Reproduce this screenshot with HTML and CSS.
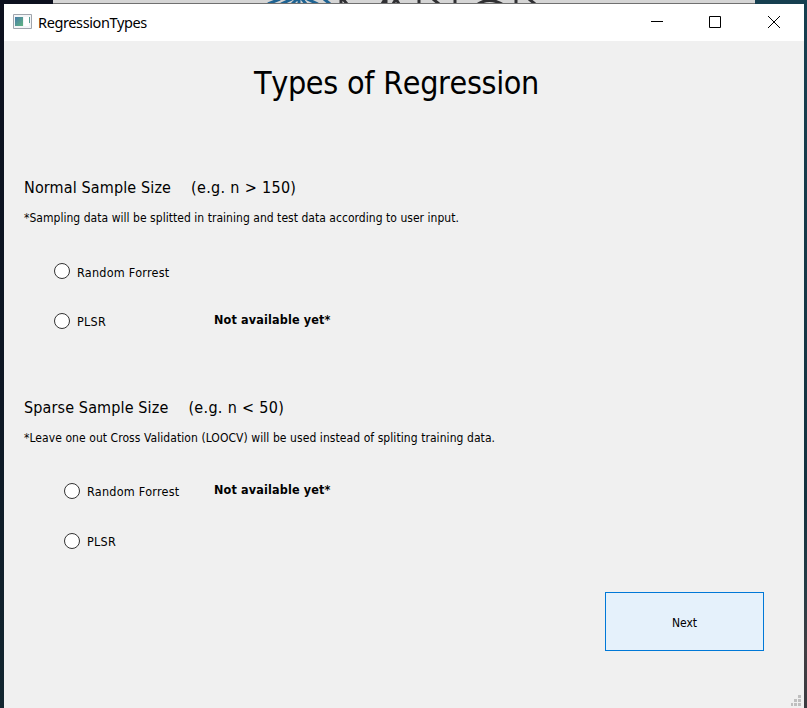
FILE: index.html
```html
<!DOCTYPE html>
<html lang="en">
<head>
<meta charset="utf-8">
<title>RegressionTypes</title>
<link rel="stylesheet" href="styles.css">
</head>
<body>
<div class="backdrop">
  <svg class="emblem" width="64" height="3" viewBox="0 0 64 3" fill="none" stroke="#1f6392" stroke-width="3"><path d="M1 4 13-1M14 4 25-1M25 4 30-1M32-1V4M39 4 35-1M51 4 40-1M63 4 57-1"/></svg>
  <svg class="letters" width="202" height="3" viewBox="0 0 202 3" fill="none" stroke="#303033" stroke-width="3"><path d="M2 0V3M4-1 8 4M43 4 46-1M47 0V3M54 4 57-1 60 4M80 0V3M94-1 100 4M116 0V3M139 4Q150-3 163 4M177 0V3M190-1 196 4"/></svg>
</div>
<main class="window">
  <header class="titlebar">
    <svg class="app-icon" width="19" height="16" viewBox="0 0 19 16"><defs><linearGradient id="screen" x2="1" y2="1"><stop stop-color="#487baa"/><stop offset="1" stop-color="#5fb580"/></linearGradient></defs><path fill="#f3f5f7" stroke="#a0a5ad" d="M.5.5h18v14H.5z"/><path fill="url(#screen)" d="M2 3h8v9H2z"/><path fill="#fff" d="M11 3h5v9h-5z"/><path fill="#5b9d94" d="M16 3h1v6h-1z"/></svg>
    <span class="caption">RegressionTypes</span>
    <svg class="controls" width="130" height="14" viewBox="0 0 130 14" fill="none" stroke="#000"><path d="M0 5.500h12M58.500.5h11v11h-11z"/><path d="m117 0 12 12M129 0 117 12"/></svg>
  </header>
  <h1>Types of Regression</h1>
  <section class="normal">
    <h2><span class="name">Normal Sample Size</span><span class="size">(e.g. n &gt; 150)</span></h2>
    <p>*Sampling data will be splitted in training and test data according to user input.</p>
    <div class="option"><i class="radio"></i><span class="label">Random Forrest</span></div>
    <div class="option"><i class="radio"></i><span class="label">PLSR</span><b>Not available yet*</b></div>
  </section>
  <section class="sparse">
    <h2><span class="name">Sparse Sample Size</span><span class="size">(e.g. n &lt; 50)</span></h2>
    <p>*Leave one out Cross Validation (LOOCV) will be used instead of spliting training data.</p>
    <div class="option"><i class="radio"></i><span class="label">Random Forrest</span><b>Not available yet*</b></div>
    <div class="option"><i class="radio"></i><span class="label">PLSR</span></div>
  </section>
  <footer><button>Next</button></footer>
  <svg class="grip" width="10" height="11" viewBox="0 0 10 11" fill="#bfbfbf"><path d="M7 0h3v3H7zM3 4h3v3H3zM7 4h3v3H7zM0 8h2v3H0zM3 8h3v3H3zM7 8h3v3H7z"/></svg>
</main>
</body>
</html>
```
FILE: styles.css
```css
* { box-sizing: border-box; }
body {
  margin: 0;
  width: 807px;
  height: 708px;
  overflow: hidden;
  background:
    linear-gradient(#163f50, #12303d 500px, #243c45 590px, #403d42 650px, #3a3a3f) right / 52px 100% no-repeat,
    linear-gradient(#0c101e, #0d1724 400px, #122630);
  font-family: "DejaVu Sans Condensed", "DejaVu Sans", sans-serif;
  font-stretch: condensed;
  color: #000;
}
.backdrop {
  display: flex;
  height: 4px;
  margin: 0 53px;
  width: 702px;
  padding-left: 214px;
  gap: 8px;
  background: #d5d5d5;
  border-bottom: 1px solid #707070;
}
.window {
  position: relative;
  height: 704px;
  margin: 0 3px 0 4px;
  background: #f0f0f0;
}
.titlebar {
  display: flex;
  align-items: center;
  height: 37px;
  padding: 0 23px 0 9px;
  background: #fff;
}
.app-icon { margin-bottom: 1px; }
.caption {
  margin: -2px 0 0 6px;
  font: 14.500px "Noto Sans", sans-serif;
  letter-spacing: -.38px;
}
.controls { margin-left: auto; }
h1 {
  margin: 0;
  height: 84px;
  padding-left: 250px;
  font-size: 32px;
  font-weight: 400;
  font-kerning: none;
  letter-spacing: -.36px;
  word-spacing: .4px;
  line-height: 84px;
  white-space: nowrap;
}
section { height: 220px; padding: 51px 0 0 20px; white-space: nowrap; }
h2 {
  display: flex;
  gap: 20px;
  margin: 0;
  font-size: 16px;
  font-weight: 400;
  line-height: 24px;
}
.name { letter-spacing: .13px; }
.size { letter-spacing: .32px; }
p { margin: 8px 0 0; font-size: 12px; line-height: 20px; letter-spacing: .035px; }
.sparse p { letter-spacing: .07px; }
.option {
  display: flex;
  align-items: center;
  height: 20px;
  margin: 30px 0 0 30px;
  font-size: 12.500px;
}
.option:nth-of-type(1) { margin-top: 33px; }
.sparse .option { margin-left: 40px; }
.radio {
  width: 16px;
  height: 16px;
  margin-right: 7px;
  border: 1px solid #333;
  border-radius: 50%;
  background: #fff;
}
.label { width: 137px; letter-spacing: .25px; }
.normal .option:nth-of-type(1) .label { padding-top: 2px; }
.sparse .label { width: 127px; }
b { margin-top: -4px; letter-spacing: .15px; }
footer { display: flex; justify-content: flex-end; padding: 27px 40px 0; }
button {
  width: 159px;
  height: 59px;
  padding: 2px 0 0;
  border: 1px solid #0078d7;
  background: #e5f1fb;
  color: #000;
  font: 12px "DejaVu Sans Condensed", "DejaVu Sans", sans-serif;
}
.grip { position: absolute; right: 3px; bottom: 2px; }
```
